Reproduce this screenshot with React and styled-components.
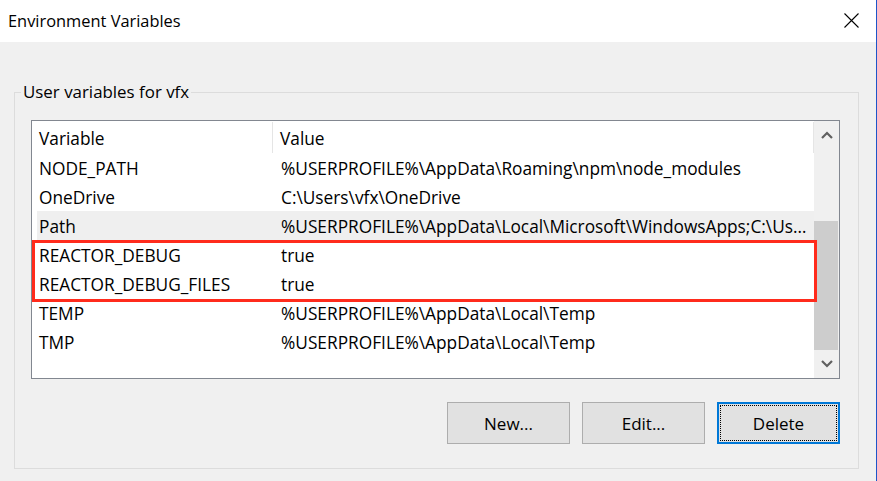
import styled, { createGlobalStyle } from 'styled-components'

const VARIABLES = [
  { name: 'NODE_PATH', value: '%USERPROFILE%\\AppData\\Roaming\\npm\\node_modules' },
  { name: 'OneDrive', value: 'C:\\Users\\vfx\\OneDrive' },
  { name: 'Path', value: '%USERPROFILE%\\AppData\\Local\\Microsoft\\WindowsApps;C:\\Users\\vfx\\AppData\\Local\\Programs', selected: true },
]

const MARKED = [
  { name: 'REACTOR_DEBUG', value: 'true' },
  { name: 'REACTOR_DEBUG_FILES', value: 'true' },
]

const REST = [
  { name: 'TEMP', value: '%USERPROFILE%\\AppData\\Local\\Temp' },
  { name: 'TMP', value: '%USERPROFILE%\\AppData\\Local\\Temp' },
]

const GlobalStyle = createGlobalStyle`
  body {
    margin: 0;
    background: #f0f0f0;
    font-family: 'Open Sans', 'Noto Sans', sans-serif;
    font-size: 17.3px;
    color: #000;
  }
`

const Window = styled.div`
  width: 877px;
  height: 481px;
  box-sizing: border-box;
  border-right: 1px solid #1d55c8;
  background: #f0f0f0;
  display: flex;
  flex-direction: column;
  overflow: hidden;
`

const TitleBar = styled.div`
  height: 42px;
  flex-shrink: 0;
  background: #fff;
  display: flex;
  align-items: center;
  justify-content: space-between;
  padding: 0 17px 0 8px;
`

const Title = styled.div`
  font-size: 16.4px;
  margin-top: -2px;
`

const CloseButton = styled.div`
  width: 15px;
  height: 15px;
  display: flex;
  margin-top: -2px;
`

const GroupBox = styled.fieldset`
  margin: 40px 17px 0 14px;
  padding: 0;
  border: 1px solid #dcdcdc;
  min-width: 0;
`

const GroupTitle = styled.legend`
  margin-left: 6px;
  padding: 0 2px;
  line-height: 20px;
  font-size: 16.9px;
`

const GroupContent = styled.div`
  padding: 18px 18px 24px 16px;
  display: flex;
  flex-direction: column;
  gap: 23px;
`

const ListView = styled.div`
  height: 259px;
  box-sizing: border-box;
  border: 1px solid #828790;
  background: #fff;
  display: flex;
`

const ListBody = styled.div`
  flex: 1;
  min-width: 0;
  display: flex;
  flex-direction: column;
`

const HeaderRow = styled.div`
  height: 32px;
  display: flex;
  align-items: center;
`

const HeaderCell = styled.div`
  width: ${p => p.$width};
  flex: ${p => (p.$grow ? 1 : 'none')};
  height: 31px;
  box-sizing: border-box;
  display: flex;
  align-items: center;
  padding: 2px 0 0 ${p => p.$pad}px;
  border-right: 1px solid #e5e5e5;
`

const Row = styled.div`
  height: 29px;
  margin-left: 5px;
  display: flex;
  align-items: center;
  padding-top: 1px;
  box-sizing: border-box;
  background: ${p => (p.$selected ? '#efefef' : 'transparent')};
`

const NameCell = styled.div`
  width: 236px;
  flex: none;
  padding-left: 2px;
  box-sizing: border-box;
  white-space: nowrap;
`

const ValueCell = styled.div`
  flex: 1;
  min-width: 0;
  padding: 0 5px 0 8px;
  white-space: nowrap;
  overflow: hidden;
  text-overflow: ellipsis;
`

const Marked = styled.div`
  position: relative;

  &::after {
    content: '';
    position: absolute;
    top: 0;
    left: 0;
    right: -3px;
    bottom: -4px;
    border: 3px solid #ff2b1c;
    z-index: 1;
  }
`

const Scrollbar = styled.div`
  width: 25px;
  flex: none;
  background: #f0f0f0;
  display: flex;
  flex-direction: column;
`

const ArrowButton = styled.div`
  height: 28px;
  flex: none;
  display: flex;
  align-items: center;
  justify-content: center;
`

const Track = styled.div`
  flex: 1;
  display: flex;
  flex-direction: column;
  justify-content: flex-end;
`

const Thumb = styled.div`
  height: 129px;
  margin-right: 1px;
  background: #cdcdcd;
`

const ButtonRow = styled.div`
  display: flex;
  justify-content: flex-end;
  gap: 12px;
`

const Button = styled.button`
  width: 123px;
  height: 42px;
  box-sizing: border-box;
  background: #e1e1e1;
  border: ${p => (p.$focused ? '2px solid #0078d7' : '1px solid #adadad')};
  outline: ${p => (p.$focused ? '1px dotted #000' : 'none')};
  outline-offset: -4px;
  font-family: inherit;
  font-size: 17px;
  color: #000;
  padding: 0;
`

function Chevron({ up }) {
  return (
    <svg width="12" height="8" viewBox="0 0 12 8">
      <polyline
        points={up ? '1,7 6,2 11,7' : '1,1 6,6 11,1'}
        fill="none"
        stroke="#606060"
        strokeWidth="2.2"
      />
    </svg>
  )
}

function VariableRow({ item }) {
  return (
    <Row $selected={item.selected}>
      <NameCell>{item.name}</NameCell>
      <ValueCell>{item.value}</ValueCell>
    </Row>
  )
}

export default function App() {
  return (
    <Window>
      <GlobalStyle />
      <TitleBar>
        <Title>Environment Variables</Title>
        <CloseButton>
          <svg width="15" height="15" viewBox="0 0 15 15">
            <path d="M0.5 0.5 L14.5 14.5 M14.5 0.5 L0.5 14.5" stroke="#000" strokeWidth="1.1" />
          </svg>
        </CloseButton>
      </TitleBar>
      <GroupBox>
        <GroupTitle>User variables for vfx</GroupTitle>
        <GroupContent>
          <ListView>
            <ListBody>
              <HeaderRow>
                <HeaderCell $width="241px" $pad={7}>Variable</HeaderCell>
                <HeaderCell $grow $pad={7}>Value</HeaderCell>
              </HeaderRow>
              {VARIABLES.map(item => <VariableRow key={item.name} item={item} />)}
              <Marked>
                {MARKED.map(item => <VariableRow key={item.name} item={item} />)}
              </Marked>
              {REST.map(item => <VariableRow key={item.name} item={item} />)}
            </ListBody>
            <Scrollbar>
              <ArrowButton><Chevron up /></ArrowButton>
              <Track><Thumb /></Track>
              <ArrowButton><Chevron /></ArrowButton>
            </Scrollbar>
          </ListView>
          <ButtonRow>
            <Button>New...</Button>
            <Button>Edit...</Button>
            <Button $focused>Delete</Button>
          </ButtonRow>
        </GroupContent>
      </GroupBox>
    </Window>
  )
}
